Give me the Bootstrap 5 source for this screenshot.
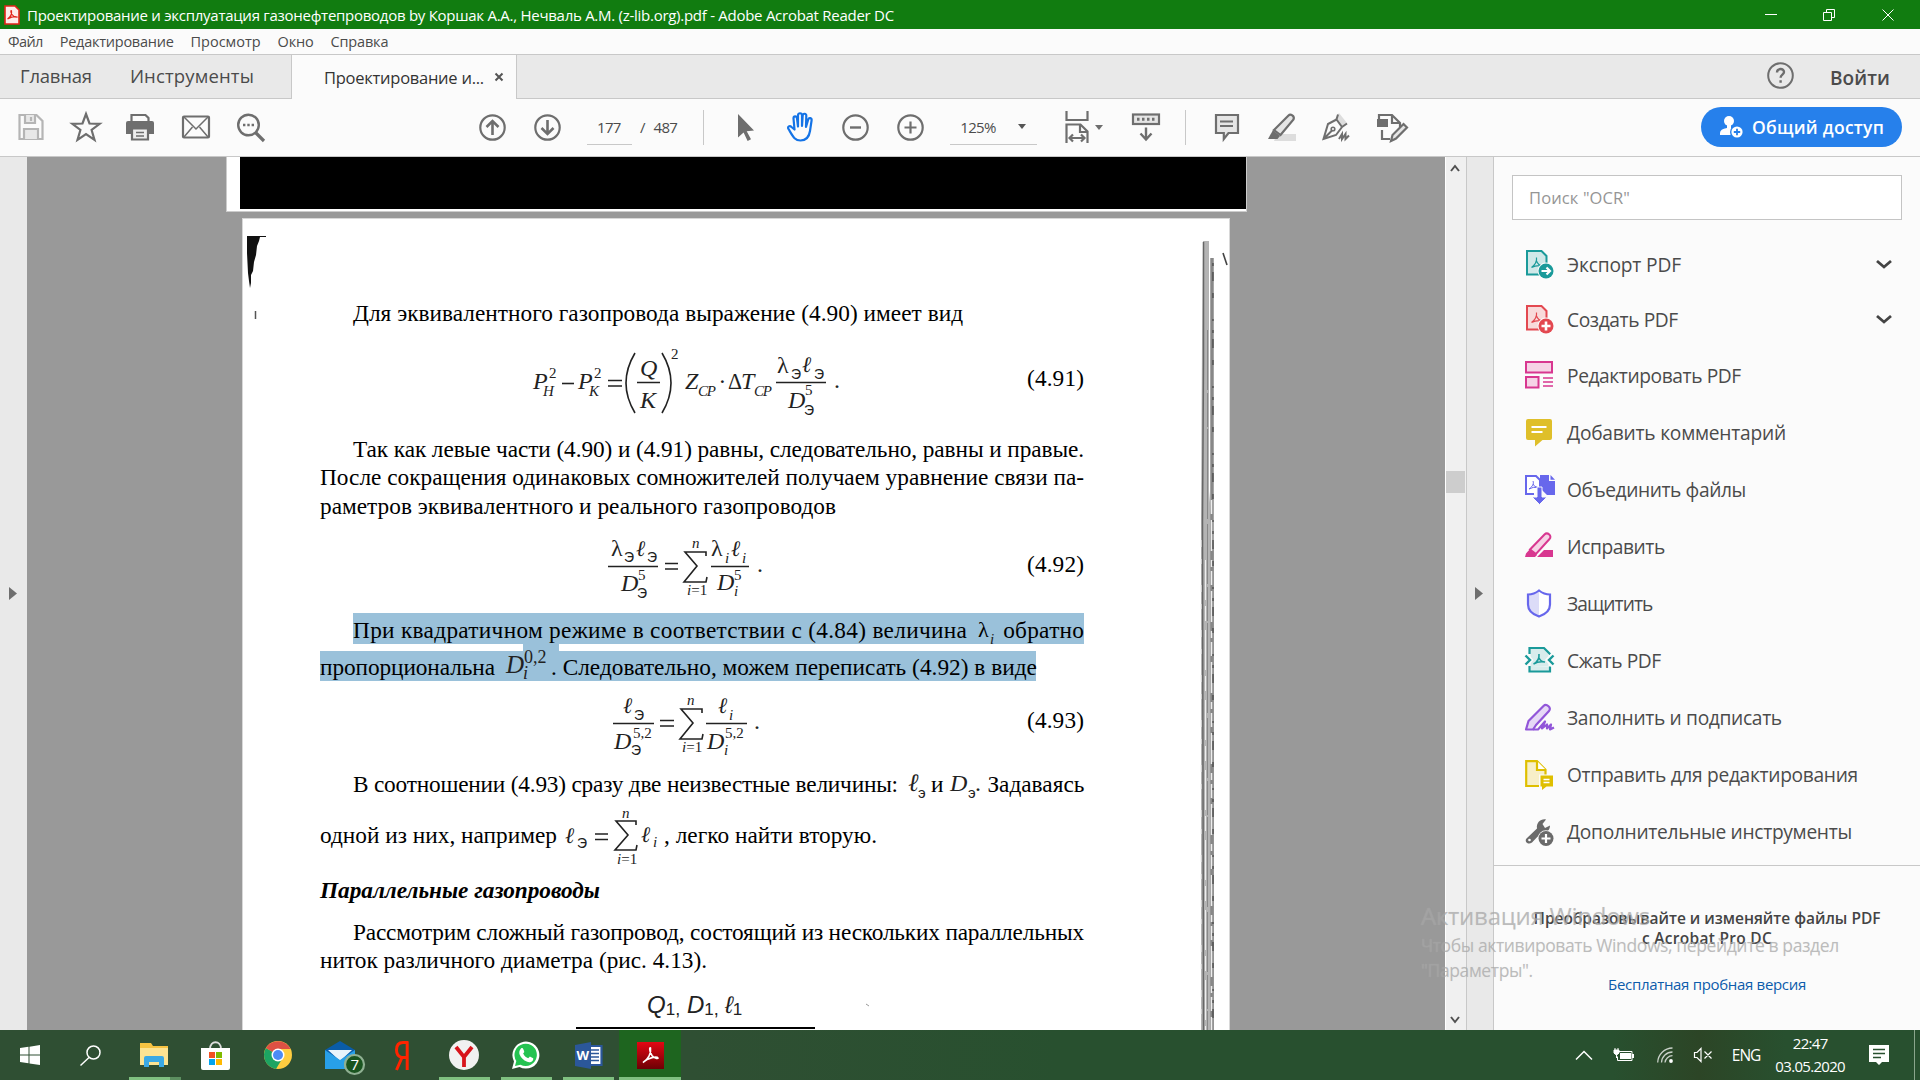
<!DOCTYPE html>
<html lang="ru">
<head>
<meta charset="utf-8">
<meta name="viewport" content="width=device-width, initial-scale=1">
<title>Adobe Acrobat Reader DC</title>
<link href="https://cdn.jsdelivr.net/npm/bootstrap@5.3.0/dist/css/bootstrap.min.css" rel="stylesheet">
<style>
html,body{height:100%;overflow:hidden}
body{font-family:"Open Sans","Noto Sans",sans-serif;color:#4b4b4b;background:#fbfbfb;width:1920px;height:1080px;line-height:1.2}
svg{display:block;flex:none;overflow:visible}
[data-w]{white-space:pre;display:inline-block}
.titlebar{height:29px;background:#117c10;color:#fff;font-size:15px;padding-left:4px}
.winbtn{width:58.5px;display:flex;justify-content:center}
.menubar{height:26px;border-bottom:1px solid #c8c8c8;font-size:14.5px;padding-left:8px;gap:17px;padding-top:1px}
.tabstrip{height:44px;background:#e9e9e9}
.tabstrip>div{border-bottom:1px solid #c8c8c8}
.tab-plain{width:291px;padding-left:20px;gap:38px;font-size:18.5px}
.tabstrip>.tab-open{width:226px;background:#fbfbfb;border:1px solid #c8c8c8;border-width:0 1px;padding-left:32px;padding-top:1px;color:#333;font-size:16.5px}
.tab-rest{padding-right:30px;gap:36px;font-size:19px}
.toolrow{height:58px;border-bottom:1px solid #c8c8c8;color:#6e6e6e;padding-left:3px;padding-bottom:1px}
.tool{width:55px;display:flex;justify-content:center}
.tool svg,.tile svg{fill:none;stroke:currentColor;stroke-width:2.2}
.field{height:35px;border-bottom:1px solid #c8c8c8;font-size:15px;color:#4b4b4b}
.vsep{width:1px;height:35px;background:#c8c8c8}
.share{width:201px;height:40px;border-radius:20px;background:#2680eb;color:#fff;font-weight:600;font-size:17.5px;padding-left:19px;gap:9px;margin-right:18px}
.workarea{height:873px}
.leftstrip{width:27px;background:#e9e9e9;padding-left:9px}
.canvas-gray{width:1418px;background:#999;overflow:hidden;padding-left:199px}
.prevpage{width:1021px;height:55px;background:#fff;border:1px solid #ccc;border-top:0;padding:0 0 3px 13px}
.prevpage div{background:#000;height:52px}
.page{width:988px;height:820px;margin:6px 0 0 16px;border:1px solid #d8d8d8;border-bottom:0;background:#fff;padding:80px 0 0 77px;color:#000;font-family:"Liberation Serif",serif;font-size:23.3px}
.ln{height:28px;line-height:28px;display:flex;position:relative}
.ind{padding-left:33px}
.sel::before{content:"";position:absolute;background:#9ac1da;z-index:0}
.sel>*{position:relative;z-index:1}
.sel-a::before{left:33px;top:-3px;width:731px;height:31px}
.sel-b::before{left:0;top:-2px;width:716px;height:30px}
.sel-b .bump{position:absolute;left:203px;top:-9px;width:36px;height:10px;background:#9ac1da;z-index:0}
.eqrow{display:flex;width:765px;position:relative}
.eqrow>span{position:absolute;left:707px}
.math{font-family:"Liberation Serif",serif;font-style:italic;font-size:24px;fill:#222;stroke:none}
.math .s{font-size:15px}
.math .e{font-family:"Liberation Sans",sans-serif;font-style:normal;font-size:14px}
.math .u{font-style:normal}
.math .l{font-family:"Liberation Serif","DejaVu Serif",serif;font-size:22px}
.math path{fill:none;stroke:#222;stroke-width:1.6}
.scroller{width:22px;background:#f0f0f0;border-right:1px solid #c8c8c8;border-left:1px solid #fff}
.thumb{width:19px;height:22px;background:#cdcdcd;margin-top:299px}
.rightstrip{width:27px;background:#e9e9e9;border-right:1px solid #c8c8c8;padding-left:8px}
.panel{width:426px;background:#fbfbfb;padding-top:18px}
.search{width:390px;height:45px;margin-left:18px;background:#fff;border:1px solid #c4c4c4;color:#959595;font-size:16.5px;padding:1px 0 0 16px}
.toolitem{height:57px;padding-left:31px;gap:12px;font-size:19.2px;color:#4b4b4b}
.promo{border-top:1px solid #c8c8c8;height:165px;padding-top:42px;font-size:15.5px;font-weight:600;color:#444;line-height:20px}
.promo a{font-weight:400;color:#0d5cab;font-size:15px;text-decoration:none;margin-top:26px}
.wmark{position:absolute;left:1421px;top:899px;color:rgba(160,160,160,.65);font-size:17.5px;line-height:25px;text-shadow:0 0 1px rgba(200,200,200,.35)}
.wmark .big{font-size:24px;line-height:34px}
.taskbar{height:50px;background:linear-gradient(90deg,#2f4f33 0,#2f4f33 36%,#28502f 55%,#28502f 84%,#2c4526 88.5%,#28502f 93%,#28502f);color:#fff;font-size:15.5px}
.tile{width:62px;height:50px;display:flex;align-items:center;justify-content:center;position:relative}
.tile svg{stroke:none}
.run::after{content:"";position:absolute;left:6px;right:5px;bottom:0;height:3px;background:#7fc080}
.run2::after{right:15px;box-shadow:11px 0 0 0 #5c8f60}
.act{background:#1e651f}.act::after{left:0;right:0}
.scan{position:absolute;left:243px;top:219px;z-index:2}
</style>
</head>
<body class="d-flex flex-column position-relative">

<header class="titlebar d-flex align-items-center">
  <svg width="16" height="20" viewBox="0 0 16 20"><path d="M1 1h10l4 4v14H1z" fill="#fdecea" stroke="#e2231a" stroke-width="1.6"/><path d="M3.500 14c3-2 4.500-5 4-8-.5-1.500-1.300 1 .5 3.500 1.500 2 3 3 5 2.500-2-1-6 .2-9.500 2z" fill="none" stroke="#e2231a" stroke-width="1.200"/></svg>
  <span data-w="867" style="margin-left:7px">Проектирование и эксплуатация газонефтепроводов by Коршак А.А., Нечваль А.М. (z-lib.org).pdf - Adobe Acrobat Reader DC</span>
  <div class="d-flex ms-auto align-items-center" style="padding-right:3px">
    <div class="winbtn"><svg width="12" height="12"><path d="M0 5.500h12" stroke="#fff"/></svg></div>
    <div class="winbtn"><svg width="12" height="12"><path d="M.5 3.500h8v8h-8zM3.500 3.500v-3h8v8h-3" fill="none" stroke="#fff"/></svg></div>
    <div class="winbtn"><svg width="12" height="12"><path d="M.5.5l11 11M11.500.5l-11 11" stroke="#fff"/></svg></div>
  </div>
</header>

<nav class="menubar d-flex align-items-center">
  <span data-w="35">Файл</span><span data-w="114">Редактирование</span><span data-w="70">Просмотр</span><span data-w="36">Окно</span><span data-w="58">Справка</span>
</nav>

<div class="tabstrip d-flex">
  <div class="tab-plain d-flex align-items-center"><span data-w="72">Главная</span><span data-w="124">Инструменты</span></div>
  <div class="tab-open d-flex align-items-center"><span data-w="160">Проектирование и...</span>
    <svg style="margin-left:11px;margin-bottom:2px" width="8" height="8"><path d="M.5.5l7 7M7.500.5l-7 7" stroke="#555" stroke-width="2"/></svg></div>
  <div class="tab-rest flex-grow-1 d-flex align-items-center justify-content-end">
    <svg width="27" height="27" viewBox="0 0 27 27" fill="none" stroke="#6e6e6e" stroke-width="2"><circle cx="13.500" cy="12.500" r="12.300"/><path d="M10 9.500c0-4.500 7-4.500 7-.5 0 2.800-3.400 2.600-3.400 5.800M13.600 17.200v2.600" stroke-width="2.400"/></svg>
    <span data-w="60" class="fw-semibold pt-1">Войти</span>
  </div>
</div>

<div class="toolrow d-flex align-items-center">
  <div class="tool" style="color:#b5b5b5"><svg width="28" height="28" viewBox="0 0 28 28"><path d="M2.500 2h17l6 6v18h-23z"/><path d="M8 2v8h10V2M14 4v4M7 26V16h14v10" fill="#e8e8e8"/></svg></div>
  <div class="tool"><svg width="30" height="30" viewBox="0 0 30 30"><path d="M15 2l3.500 9.500 10.200.3-8.100 6.200 2.900 9.900-8.500-5.800-8.500 5.800 2.900-9.900-8.100-6.200 10.200-.3z"/></svg></div>
  <div class="tool"><svg style="margin-right:2px" width="28" height="28" viewBox="0 0 28 28"><path d="M5.500 9V2h14l3 3v4"/><path d="M0 10q0-2 2-2h24q2 0 2 2v11h-5v-5H5v5H0z" fill="currentColor" stroke="none"/><path d="M6 15.500h16v11H6z" fill="#eee"/><path d="M10 19.500h8M10 23h8" stroke-width="1.500"/></svg></div>
  <div class="tool"><svg width="28" height="24" viewBox="0 0 28 24"><rect x="1" y="1.500" width="26" height="21" rx="1"/><path d="M2 2l12 12L26 2M2 22l8.500-10M26 22l-8.500-10" stroke-width="1.500"/></svg></div>
  <div class="tool"><svg width="28" height="30" viewBox="0 0 28 30"><circle cx="11.500" cy="13" r="10.300" stroke-width="2.400"/><path d="M18.500 20.500l8.500 8.500" stroke-width="3.200"/><path d="M6 13h2.400M10.300 13h2.400M14.600 13h2.400" stroke-width="2.400"/></svg></div>
  <div class="tool" style="margin-left:187px"><svg width="27" height="27" viewBox="0 0 27 27"><circle cx="13.500" cy="13.500" r="12.200"/><path d="M13.500 21V7.500M7.500 13l6-6 6 6" stroke-width="2.600"/></svg></div>
  <div class="tool"><svg width="27" height="27" viewBox="0 0 27 27"><circle cx="13.500" cy="13.500" r="12.200"/><path d="M13.500 6v13.500M7.500 14l6 6 6-6" stroke-width="2.600"/></svg></div>
  <div class="field d-flex align-items-center" style="width:45px;margin-left:12px;padding-left:10px"><span data-w="24">177</span></div>
  <div class="d-flex" style="margin-left:8px;font-size:15px;color:#4b4b4b;gap:8px"><span>/</span><span data-w="24">487</span></div>
  <div class="vsep" style="margin-left:26px"></div>
  <div class="tool" style="margin-left:14px"><svg width="18" height="27" viewBox="0 0 18 27"><path d="M1 0l16 16.500-7.300.7 4.300 8-3.400 1.800-4-8.500L1 23.500z" fill="#6e6e6e" stroke="none"/></svg></div>
  <div class="tool" style="color:#1473e6"><svg width="29" height="30" viewBox="0 0 29 30" stroke-linecap="round" stroke-linejoin="round"><path d="M8.500 17.500L7.500 6.500c0-2.800 3.200-2.800 3.500 0l1 8V3.500c0-3 4-3 4 0V14l.7-10.500c.3-2.500 3.600-2.300 3.600.3L20 15l2.200-7.500c.8-2.300 3.700-1.500 3.400.8L24 19c-1 6.500-4 9.500-9.500 9.500-6 0-7.500-4-12-11.500-1.500-2.500 1.300-3.800 3-2z"/></svg></div>
  <div class="tool"><svg width="27" height="27" viewBox="0 0 27 27"><circle cx="13.500" cy="13.500" r="12.200"/><path d="M8 13.500h11" stroke-width="2.400"/></svg></div>
  <div class="tool"><svg width="27" height="27" viewBox="0 0 27 27"><circle cx="13.500" cy="13.500" r="12.200"/><path d="M7.500 13.500h12M13.500 7.500v12" stroke-width="2.200"/></svg></div>
  <div class="field d-flex align-items-center" style="width:87px;margin-left:12px;padding-left:10px"><span data-w="36">125%</span><svg style="margin-left:22px" width="8" height="5"><path d="M0 0h8l-4 5z" fill="#555"/></svg></div>
  <div class="tool" style="margin-left:12px"><svg width="24" height="32" viewBox="0 0 24 32"><path d="M1.500 0v9h21V0M1.500 32V13.500h14l7 7V32M15 14v7h7M5 27h14M8 23.500L4.500 27 8 30.500M16 23.500l3.500 3.500-3.500 3.500"/></svg></div>
  <svg style="margin-left:-9px" width="8" height="5"><path d="M0 0h8l-4 5z" fill="#6e6e6e"/></svg>
  <div class="tool" style="margin-left:15px"><svg width="28" height="28" viewBox="0 0 28 28"><rect x="1" y="1.500" width="26" height="9.500" fill="#e5e5e5"/><path d="M5 6.200h18" stroke-dasharray="2.500 2.500" stroke-width="3"/><path d="M14 14.500v11M8.500 20.500l5.500 6 5.500-6" stroke-width="2.400"/></svg></div>
  <div class="vsep" style="margin-left:12px"></div>
  <div class="tool" style="margin-left:13px"><svg width="26" height="28" viewBox="0 0 26 28"><path d="M2 2h22v18H14.500l-4.700 6v-6H2z" fill="#e5e5e5"/><path d="M6 8.500h13M6 13h13" stroke-width="1.800"/></svg></div>
  <div class="tool"><svg width="28" height="28" viewBox="0 0 28 28"><path d="M9 21h19v7H6z" fill="#ddd" stroke="none"/><path d="M6 17L20.500 2.500c2-2 6.500.5 5 4L12.500 22z" fill="#e5e5e5"/><path d="M5 17l7 6-2.500 3H0z" fill="#6e6e6e" stroke="none"/></svg></div>
  <div class="tool"><svg width="29" height="28" viewBox="0 0 29 28"><path d="M13 6l4-6 8 10-4 4z" fill="#ddd" stroke="none"/><path d="M14.500 6.500L6 11 1.500 26 14 22l6-8zM14.500 6.500L16 1.500M20 14l5-3.500M2 25.500l8-8M17 26l3-5v5l3.500-5v5l3.500-3.500" stroke-width="2"/><circle cx="11" cy="16" r="1.800" stroke-width="1.600"/></svg></div>
  <div class="tool"><svg width="30" height="29" viewBox="0 0 30 29"><rect x="0" y="6" width="11" height="8" fill="#6e6e6e" stroke="none"/><path d="M2 6V2h13l8 8v4M15 2v8h7M5 17v9h8"/><path d="M14 28l1.500-6 11-11 3.500 3.500-11 11z" fill="#e5e5e5"/></svg></div>
  <div class="share d-flex align-items-center ms-auto">
    <svg width="23" height="24" viewBox="0 0 23 24"><circle cx="9" cy="6" r="5" fill="#fff"/><path d="M7 9h4v4l4 2v5H0v-2q0-4 7-5z" fill="#fff"/><circle cx="17" cy="17" r="7" fill="#2680eb"/><circle cx="17" cy="17" r="5.600" fill="#fff"/><path d="M13.800 17h6.400M17 13.800v6.400" stroke="#2680eb" stroke-width="1.800"/></svg>
    <span data-w="132">Общий доступ</span>
  </div>
</div>

<main class="workarea d-flex">
  <aside class="leftstrip d-flex align-items-center"><svg width="8" height="13"><path d="M0 0l8 6.500-8 6.500z" fill="#6e6e6e"/></svg></aside>

  <section class="canvas-gray">
    <div class="prevpage"><div></div></div>
    <article class="page">
      <div class="ln ind"><span data-w="610">Для эквивалентного газопровода выражение (4.90) имеет вид</span></div>

      <div class="eqrow" style="height:108px">
        <svg class="math" width="700" height="108" viewBox="320 327 700 108">
          <text x="533" y="389">P</text><text class="s u" x="549" y="378">2</text><text class="s" x="543" y="396">H</text>
          <path d="M562 383.500h12"/>
          <text x="578" y="389">P</text><text class="s u" x="594" y="378">2</text><text class="s" x="589" y="396">K</text>
          <path d="M608 380.500h14M608 386h14M637 382.500h23M635 353q-18 30 0 60M662 353q18 30 0 60"/>
          <text x="640" y="376">Q</text><text x="640" y="408">K</text><text class="s u" x="671" y="359">2</text>
          <text x="685" y="389">Z</text><text class="s" x="698" y="396" textLength="18">СР</text><text x="719" y="389">·</text>
          <text x="728" y="389" class="u" textLength="14" lengthAdjust="spacingAndGlyphs">Δ</text><text x="741" y="389">T</text><text class="s" x="754" y="396" textLength="18">СР</text>
          <path d="M776 382.500h50"/>
          <text x="777" y="373" class="u">λ</text><text class="e" x="791" y="379">Э</text><text class="l" x="802" y="372">ℓ</text><text class="e" x="814" y="379">Э</text>
          <text x="788" y="408">D</text><text class="s u" x="805" y="395">5</text><text class="e" x="804" y="415">Э</text><text class="u" x="834" y="388">.</text>
        </svg>
        <span style="top:38px" data-w="57">(4.91)</span>
      </div>

      <div class="ln ind"><span data-w="731">Так как левые части (4.90) и (4.91) равны, следовательно, равны и правые.</span></div>
      <div class="ln" style="margin-bottom:1px"><span data-w="764">После сокращения одинаковых сомножителей получаем уравнение связи па-</span></div>
      <div class="ln"><span data-w="516">раметров эквивалентного и реального газопроводов</span></div>

      <div class="eqrow" style="height:96px">
        <svg class="math" width="700" height="95" viewBox="320 520 700 95">
          <text x="611" y="556" class="u">λ</text><text class="e" x="624" y="562">Э</text><text class="l" x="636" y="556">ℓ</text><text class="e" x="647" y="562">Э</text>
          <path d="M608 566.500h50M665 563.500h13M665 569h13M711 566.500h38"/>
          <text x="621" y="591">D</text><text class="s u" x="638" y="580">5</text><text class="e" x="637" y="598">Э</text>
          <path d="M706 556v-4h-21l12 14-13 16h22l1-5" stroke-width="2"/>
          <text class="s" x="692" y="548">n</text><text class="s" x="687" y="595">i<tspan class="u">=1</tspan></text>
          <text x="711" y="556" class="u">λ</text><text class="s" x="725" y="563">i</text><text class="l" x="731" y="556">ℓ</text><text class="s" x="742" y="563">i</text>
          <text x="717" y="590">D</text><text class="s u" x="734" y="580">5</text><text class="s" x="734" y="596">i</text><text class="u" x="757" y="572">.</text>
        </svg>
        <span style="top:31px" data-w="57">(4.92)</span>
      </div>

      <div class="ln ind sel sel-a"><span data-w="614">При квадратичном режиме в соответствии с (4.84) величина</span>
        <svg class="math" style="margin-left:11px" width="22" height="28" viewBox="0 0 22 28"><text class="u" x="0" y="21" style="fill:#000;font-size:22px">λ</text><text class="s" x="12" y="28">i</text></svg>
        <span data-w="81" style="margin-left:3px">обратно</span></div>
      <div class="ln sel sel-b" style="margin-top:9px"><i class="bump"></i><span data-w="175">пропорциональна</span>
        <svg class="math" style="margin-left:11px" width="43" height="28" viewBox="0 0 43 28"><text x="0" y="20" style="font-size:25px">D</text><text class="u" x="18" y="10" style="font-size:18px">0,2</text><text x="17" y="26" style="font-size:18px">i</text></svg>
        <span data-w="486" style="margin-left:2px">. Следовательно, можем переписать (4.92) в виде</span></div>

      <div class="eqrow" style="height:89px">
        <svg class="math" width="700" height="89" viewBox="320 681 700 89">
          <text class="l" x="623" y="713">ℓ</text><text class="e" x="634" y="720">Э</text>
          <path d="M613 723.500h41M660 720.500h14M660 726h14M706 723.500h41"/>
          <text x="614" y="749">D</text><text class="s u" x="633" y="738">5,2</text><text class="e" x="631" y="755">Э</text>
          <path d="M702 713v-4h-21l12 14-13 16h22l1-5" stroke-width="2"/>
          <text class="s" x="687" y="705">n</text><text class="s" x="682" y="752">i<tspan class="u">=1</tspan></text>
          <text class="l" x="718" y="713">ℓ</text><text class="s" x="729" y="720">i</text>
          <text x="707" y="749">D</text><text class="s u" x="725" y="738">5,2</text><text class="s" x="724" y="755">i</text><text class="u" x="754" y="729">.</text>
        </svg>
        <span style="top:26px" data-w="57">(4.93)</span>
      </div>

      <div class="ln ind"><span data-w="545">В соотношении (4.93) сразу две неизвестные величины:</span>
        <svg class="math" style="margin-left:10px" width="20" height="28" viewBox="0 0 20 28"><text class="l" x="0" y="21" style="font-size:25px">ℓ</text><text class="e" x="10" y="28" style="font-size:15px">э</text></svg>
        <span style="margin-left:3px">и</span>
        <svg class="math" style="margin-left:7px" width="33" height="28" viewBox="0 0 33 28"><text x="0" y="21">D</text><text class="e" x="18" y="28" style="font-size:15px">э</text><text class="u" x="25" y="21">.</text></svg>
        <span data-w="97" style="margin-left:4px">Задаваясь</span></div>
      <div class="ln" style="margin-top:23px"><span data-w="237">одной из них, например</span>
        <svg class="math" style="margin-left:9px" width="95" height="28" viewBox="566 821 95 28"><text class="l" x="565" y="843">ℓ</text><text class="e" x="577" y="848">Э</text><path d="M595 834h13M595 839.500h13"/><path d="M636 825v-4h-20l12 14-13 15h21l1-5" stroke-width="2"/><text class="s" x="622" y="818">n</text><text class="s" x="617" y="864">i<tspan class="u">=1</tspan></text><text class="l" x="641" y="842">ℓ</text><text class="s" x="653" y="847">i</text></svg>
        <span data-w="213" style="margin-left:3px">, легко найти вторую.</span></div>
      <div class="ln fst-italic fw-bold" style="margin-top:27px"><span data-w="280">Параллельные газопроводы</span></div>
      <div class="ln ind" style="margin-top:14px"><span data-w="731">Рассмотрим сложный газопровод, состоящий из нескольких параллельных</span></div>
      <div class="ln"><span data-w="387">ниток различного диаметра (рис. 4.13).</span></div>
      <div class="eqrow" style="height:56px">
        <svg class="math" width="700" height="56" viewBox="320 975 700 56"><g style="font-family:'Liberation Sans',sans-serif;font-size:24px"><text x="647" y="1014">Q<tspan class="e" dy="2" style="font-size:17px">1</tspan><tspan class="e" style="font-size:18px">,</tspan></text><text x="687" y="1014">D<tspan class="e" dy="2" style="font-size:17px">1</tspan><tspan class="e" style="font-size:18px">,</tspan></text><text x="725" y="1014">ℓ<tspan class="e" dy="2" style="font-size:17px">1</tspan></text></g><path d="M576 1029h239" style="stroke:#000;stroke-width:2"/></svg>
      </div>
    </article>
  </section>

  <div class="scroller d-flex flex-column align-items-start">
    <svg style="margin:7px 0 0 4px" width="10" height="8"><path d="M1 7l4-5 4 5" fill="none" stroke="#505050" stroke-width="2"/></svg>
    <div class="thumb"></div>
    <svg class="mt-auto" style="margin:0 0 6px 4px" width="10" height="8"><path d="M1 1l4 5 4-5" fill="none" stroke="#505050" stroke-width="2"/></svg>
  </div>
  <aside class="rightstrip d-flex align-items-center"><svg width="8" height="13"><path d="M0 0l8 6.500-8 6.500z" fill="#6e6e6e"/></svg></aside>

  <aside class="panel d-flex flex-column">
    <div class="search d-flex align-items-center"><span data-w="101">Поиск "OCR"</span></div>
    <div style="height:17px"></div>
    <div class="toolitem d-flex align-items-center" style="height:55px">
      <svg width="30" height="30" viewBox="0 0 30 30"><path d="M2 1h14.500l5 5v18.500H2z" fill="#cfe8e8" stroke="#1a9a9a" stroke-width="2"/><path d="M6.500 17.500c4-3 5.500-6.500 5-10M11.500 11c1 2.500 3 4.500 6 5M6.500 17.500q5-2.500 11-1.500" fill="none" stroke="#1a9a9a" stroke-width="1.200"/><circle cx="21" cy="21" r="8.400" fill="#fbfbfb"/><circle cx="21" cy="21" r="7.500" fill="#1a9a9a"/><path d="M16.500 21h8M21.500 17.500l3.500 3.500-3.500 3.500" stroke="#fff" stroke-width="2.200" fill="none"/></svg>
      <span data-w="114">Экспорт PDF</span>
      <svg class="ms-auto" style="margin-right:28px" width="16" height="9"><path d="M1 1l7 6 7-6" fill="none" stroke="#444" stroke-width="2.800"/></svg></div>
    <div class="toolitem d-flex align-items-center" style="height:55px">
      <svg width="30" height="30" viewBox="0 0 30 30"><path d="M2 1h14.500l5 5v18.500H2z" fill="#f8dada" stroke="#e34850" stroke-width="2"/><path d="M6.500 17.500c4-3 5.500-6.500 5-10M11.500 11c1 2.500 3 4.500 6 5M6.500 17.500q5-2.500 11-1.500" fill="none" stroke="#e34850" stroke-width="1.200"/><circle cx="21" cy="21" r="8.400" fill="#fbfbfb"/><circle cx="21" cy="21" r="7.500" fill="#e34850"/><path d="M16.500 21h9M21 16.500v9" stroke="#fff" stroke-width="2.600"/></svg>
      <span data-w="111">Создать PDF</span>
      <svg class="ms-auto" style="margin-right:28px" width="16" height="9"><path d="M1 1l7 6 7-6" fill="none" stroke="#444" stroke-width="2.800"/></svg></div>
    <div class="toolitem d-flex align-items-center">
      <svg width="30" height="30" viewBox="0 0 30 30" stroke="#d83790" stroke-width="2" fill="#f6d3e6"><rect x="1" y="1" width="26" height="10.500"/><rect x="1" y="16" width="12.500" height="10.500"/><path d="M18 17h10M18 21h10M18 25h10" stroke-width="1.300"/></svg>
      <span data-w="174">Редактировать PDF</span></div>
    <div class="toolitem d-flex align-items-center">
      <svg width="30" height="30" viewBox="0 0 30 30"><path d="M3 1h22q2 0 2 2v17q0 2-2 2h-7.500L10 28.500V22H3q-2 0-2-2V3q0-2 2-2z" fill="#dfbf2a"/><path d="M6.500 9h15M6.500 14h11" stroke="#fff" stroke-width="2"/></svg>
      <span data-w="219">Добавить комментарий</span></div>
    <div class="toolitem d-flex align-items-center">
      <svg width="30" height="30" viewBox="0 0 30 30"><path d="M15 0h9v6h6v14h-8l-7-7z" fill="#6767ec"/><path d="M25.500 0l4.500 4.800h-4.500z" fill="#6767ec"/><path d="M9 19H1V1h10l4 4v10" fill="#fff" stroke="#6767ec" stroke-width="2"/><path d="M4 14c4-3 5-5.500 4-8M8 9q1 3 5 3.500M4 14q4-2.500 9-1.500" stroke="#6767ec" fill="none"/><path d="M12 12h5v10h5l-7.500 7.500L7 22h5z" fill="#6767ec" stroke="#fbfbfb"/></svg>
      <span data-w="179">Объединить файлы</span></div>
    <div class="toolitem d-flex align-items-center">
      <svg width="30" height="30" viewBox="0 0 30 30"><path d="M5 17.500L19.500 2.500c3-3 8 1.500 5 4.500L11 22z" fill="#f6d3e6" stroke="#d83790" stroke-width="2"/><path d="M5 17l7 6-2 2H0l1-3.500zM12 25l7-7h9v7z" fill="#d83790"/></svg>
      <span data-w="98">Исправить</span></div>
    <div class="toolitem d-flex align-items-center">
      <svg width="30" height="30" viewBox="0 0 30 30"><path d="M14 1.500q5 4 11 4v10c0 6-5 10-11 12C8 25.500 3 21.500 3 15.500v-10q6 0 11-4z" fill="#fff"/><path d="M14 1.500q-5 4-11 4v10c0 6 5 10 11 12z" fill="#dcdcf8"/><path d="M14 1.500q5 4 11 4v10c0 6-5 10-11 12C8 25.500 3 21.500 3 15.500v-10q6 0 11-4z" fill="none" stroke="#6767ec" stroke-width="2.200"/></svg>
      <span data-w="86">Защитить</span></div>
    <div class="toolitem d-flex align-items-center">
      <svg width="30" height="30" viewBox="0 0 30 30"><path d="M4.500 8V2H19l6 6v1M4.500 20v5.500H25v-5" fill="#d8ecec" stroke="#1a9a9a" stroke-width="2.200"/><path d="M5.500 8h18v12h-18z" fill="#d8ecec"/><path d="M8.500 18c4-2 6-5 5.500-10M14 12q2 4 6 4M8.500 18q5-3 11.500-2" stroke="#1a9a9a" stroke-width="1.600" fill="none"/><path d="M0 9l4.500 5L0 19M28.500 9L24 14l4.500 5" fill="none" stroke="#fbfbfb" stroke-width="6"/><path d="M.5 9.500L5 14 .5 18.500M28.500 9.500L24 14l4.500 4.500" fill="none" stroke="#1a9a9a" stroke-width="2.400"/></svg>
      <span data-w="94">Сжать PDF</span></div>
    <div class="toolitem d-flex align-items-center">
      <svg width="30" height="30" viewBox="0 0 30 30" stroke="#9256d9" stroke-width="2.200" stroke-linejoin="round"><path d="M3.500 18L18.500 3c3-3 8.500 2 5.500 5L11 22l-3 4.500H1z" fill="#e6d9f6"/><path d="M8 26.500h5l7-8-3 7 5-4v4l4-4-1 5 4-2" fill="none"/></svg>
      <span data-w="215">Заполнить и подписать</span></div>
    <div class="toolitem d-flex align-items-center">
      <svg width="30" height="30" viewBox="0 0 30 30"><path d="M1.200 1.200H12l8.500 8.500V26H1.200z" fill="#f7efc8" stroke="#dfbf00" stroke-width="2.200"/><path d="M12 1v9h9" stroke="#dfbf00" stroke-width="2.200" fill="#fff"/><path d="M14 14.500h15v14H14z" fill="#fbfbfb"/><path d="M15.500 15.500H28v11h-6.500L17 30v-3.500h-1.500z" fill="#dfbf00"/><path d="M18.500 19.500h6M18.500 22.500h6" stroke="#fff" stroke-width="1.400"/></svg>
      <span data-w="291">Отправить для редактирования</span></div>
    <div class="toolitem d-flex align-items-center">
      <svg width="30" height="30" viewBox="0 0 30 30"><path d="M1.500 21.500L12 11.500c-1-6 4-10 9-9L17.500 7l2.500 4 5-2.500c0 5-4 8-8.500 7L7 25.500c-4 3-8-1-5.500-4z" fill="#6a6a6a"/><circle cx="4.500" cy="23" r="1.300" fill="#fff"/><circle cx="21" cy="21.500" r="8.300" fill="#fbfbfb"/><circle cx="21" cy="21.500" r="7.500" fill="#6a6a6a"/><path d="M16.500 21.500h9M21 17v9" stroke="#fff" stroke-width="2.200"/></svg>
      <span data-w="285">Дополнительные инструменты</span></div>
    <div class="promo mt-auto d-flex flex-column align-items-center"><span data-w="347">Преобразовывайте и изменяйте файлы PDF</span><span data-w="130">с Acrobat Pro DC</span><a href="#" data-w="198">Бесплатная пробная версия</a></div>
  </aside>
</main>

<footer class="taskbar d-flex">
  <div class="tile" style="margin-left:-1px"><svg width="20" height="20"><path d="M0 3l8.500-1.200V9.500H0zM9.500 1.700L20 0v9.500H9.500zM0 10.500h8.500v7.800L0 17zM9.500 10.500H20V20L9.500 18.400z" fill="#fff"/></svg></div>
  <div class="tile"><svg style="margin-right:4px" width="21" height="21" viewBox="0 0 21 21"><g stroke="#fff" stroke-width="1.500"><circle cx="13.500" cy="7.500" r="6.500"/><path d="M9 12.500L.5 20.500"/></g></svg></div>
  <div class="tile run run2"><svg width="28" height="24" viewBox="0 0 28 24"><path d="M0 0h11l2 3h15v18H0z" fill="#f6c342"/><path d="M0 5h28v17H0z" fill="#fde391"/><path d="M4 24v-9q0-2 2-2h16q2 0 2 2v9h-5v-5H9v5z" fill="#3ba9e4"/></svg></div>
  <div class="tile"><svg style="margin-right:1px" width="29" height="29" viewBox="0 0 29 29"><path d="M9 8c0-9 11-9 11 0" stroke="#ddd" stroke-width="1.800"/><path d="M0 7h29v20q0 2-2 2H2q-2 0-2-2z" fill="#fff"/><path d="M8 11h6v6H8z" fill="#f25022"/><path d="M15 11h6v6h-6z" fill="#7fba00"/><path d="M8 18h6v6H8z" fill="#00a4ef"/><path d="M15 18h6v6h-6z" fill="#ffb900"/></svg></div>
  <div class="tile"><svg width="28" height="28" viewBox="0 0 28 28"><circle cx="14" cy="14" r="14" fill="#ffcd40"/><path d="M14 14L1.900 7A14 14 0 0 0 12 27.900l6-10z" fill="#1da462"/><path d="M14 14L1.900 7A14 14 0 0 1 26.500 8H14z" fill="#dd5144"/><circle cx="14" cy="14" r="6.500" fill="#fff"/><circle cx="14" cy="14" r="5" fill="#4c8bf5"/></svg></div>
  <div class="tile"><svg width="30" height="28" viewBox="0 0 30 28"><path d="M0 9L15 0l15 9v19H0z" fill="#0a5ca8"/><path d="M3 9h24l-12 11z" fill="#e9f4fb"/><path d="M0 9l15 10L30 9v19H0z" fill="#28a0e8"/></svg>
    <svg class="position-absolute" style="left:35px;top:24px" width="21" height="21"><circle cx="10.500" cy="10.500" r="9.500" fill="#1a5420" stroke="#8fb092"/><text x="6.500" y="16" font-size="15" fill="#fff" font-family="Open Sans">7</text></svg></div>
  <div class="tile"><svg width="14" height="29" viewBox="0 0 14 29"><path d="M13.500 1.500H8C3 1.500 1.500 5 1.500 9c0 4 2 6.500 5 7.500h5M12.200 1v28M7 16.500L1.500 29" stroke="#ff2400" stroke-width="3"/></svg></div>
  <div class="tile run"><svg width="30" height="30" viewBox="0 0 30 30"><circle cx="15" cy="15" r="15" fill="#f1f1f1"/><path d="M7 7l8 10 8-10M15 16v11" stroke="#d8141c" stroke-width="3.800"/></svg></div>
  <div class="tile run"><svg width="28" height="28" viewBox="0 0 28 28"><path d="M0 28l2-7.500A13.500 13.500 0 1 1 7.500 26z" fill="#fff"/><path d="M3 25l1.300-5A11.200 11.200 0 1 1 8.500 23.800z" fill="#25c351"/><path d="M9 7.500c2-1.500 2.500 1 3.200 3 .3 1-1 1.500-1 2 1.500 3 3 4 5 4.700 1-.5 1.500-2 2-1.500l3 1.500c.5 4-4 4.500-6 3.500-4-1.500-6-4-7.500-7-.8-2-.5-4.500 1.300-6.200z" fill="#fff"/></svg></div>
  <div class="tile run"><svg width="27" height="27" viewBox="0 0 27 27"><path d="M14 4h12.500v19H14z" fill="#fff" stroke="#2b579a"/><path d="M15 8h9M15 11.500h9M15 15h9M15 18.500h9" stroke="#2b579a" stroke-width="1.300"/><path d="M0 3l16-3v27L0 24z" fill="#2b579a"/><text x="1.500" y="18" font-family="Open Sans" font-weight="700" font-size="13" fill="#fff">W</text></svg></div>
  <div class="tile run act"><svg width="27" height="27"><defs><linearGradient id="ag" x2="0" y2="1"><stop stop-color="#e30613"/><stop offset="1" stop-color="#6d0004"/></linearGradient></defs><rect width="27" height="27" fill="url(#ag)"/><path d="M6 20.500c5-3 8.500-9 7.500-14.500-.8-1.500-1.800 3 1.500 7.500 2 2.500 4.500 3.500 6 2.500-1-2-10-.5-15 4.500z" stroke="#fff" stroke-width="1.600"/></svg></div>

  <div class="d-flex align-items-center ms-auto">
    <svg style="margin-right:22px" width="16" height="9"><path d="M0 8.500l8-8 8 8" fill="none" stroke="#fff" stroke-width="1.500"/></svg>
    <svg style="margin-right:23px" width="20" height="14" viewBox="0 0 20 14"><path d="M4 3.500h14v9H3.500v-4" fill="none" stroke="#fff"/><path d="M6 5h11v6H6zM18 6h2v4h-2z" fill="#fff"/><path d="M0 2h5v3L3.500 6.500h-2L0 5zM1 0v2M4 0v2M2.500 6v4" fill="#fff" stroke="#fff"/></svg>
    <svg style="margin-right:21px" width="16" height="16" viewBox="0 0 16 16"><g fill="none" stroke="#fff" stroke-opacity=".75" stroke-width="1.300"><path d="M.7 15.500A15 15 0 0 1 15.500 1M4.500 15.500A11 11 0 0 1 15.500 5M8 15.500A7.500 7.500 0 0 1 15.500 8.700"/></g><circle cx="14" cy="14" r="1.900" fill="#fff"/></svg>
    <svg style="margin-right:20px" width="18" height="14" viewBox="0 0 18 14"><path d="M.5 4.500h2.500l4-4v13l-4-4H.5zM10.500 3.500l7 7M17.500 3.500l-7 7" fill="none" stroke="#fff" stroke-width="1.200"/></svg>
    <span data-w="29" style="margin-right:15px">ENG</span>
    <div class="d-flex flex-column align-items-center" style="line-height:23px;margin-right:24px;font-size:15px"><span data-w="35">22:47</span><span data-w="70">03.05.2020</span></div>
    <svg style="margin-right:25px" width="20" height="20"><path d="M0 0h20v17h-7l-3 3-3-3H0z" fill="#fff"/><path d="M4 4.500h12M4 8.500h12M4 12.500h8" stroke="#28502f" stroke-width="1.300"/></svg>
    <div style="width:1px;height:50px;background:#8aa58c;margin-right:5px"></div>
  </div>
</footer>

<!-- dark margins left by the book scanner -->
<svg class="scan" width="987" height="811" viewBox="243 219 987 811">
  <path d="M247 236h19v1h-6l-1 4-2 5-1 9-2 7-1 9-2 4v8l-1 5-1-7-1-8-1-20z" fill="#111"/><path d="M255.500 311v8" stroke="#555" stroke-width="1.500"/>
  <path d="M1223 253l4 12" stroke="#444" stroke-width="1.600"/>
  <path d="M1203 241h6v250l5 60v479h-13V520l1-180z" fill="#b4b4b4"/>
  <g fill="none"><path d="M1203.500 242v120l-1 160 1 508" stroke="#666" stroke-width="1.500"/><path d="M1207.500 330v700" stroke="#888" stroke-dasharray="60 3 34 2 90 5"/><path d="M1212 258v772" stroke="#888" stroke-width="3.500"/><path d="M1211.500 500v530" stroke="#eee" stroke-width="1.500" stroke-dasharray="14 6 31 9 7 4"/><path d="M1213 263v767" stroke="#333" stroke-dasharray="3 6 9 12 5 21 2 9"/><path d="M1201 540v490" stroke="#eee" stroke-dasharray="7 12 5 21"/><path d="M1205.500 560v470" stroke="#eee" stroke-dasharray="40 6 15 9"/></g>
  <path d="M866 1004l3 2" stroke="#999"/>
</svg>

<div class="wmark"><div class="big"><span data-w="229">Активация Windows</span></div><div><span data-w="418">Чтобы активировать Windows, перейдите в раздел</span></div><div><span data-w="112">"Параметры".</span></div></div>

<script>
// Track every label and text line out to its set measure.
document.querySelectorAll('[data-w]').forEach(function (el) {
  var n = el.textContent.length, w = el.getBoundingClientRect().width;
  el.style.letterSpacing = ((+el.dataset.w - w) / (n - 0.5)).toFixed(3) + 'px';
});
</script>
<script src="https://cdn.jsdelivr.net/npm/bootstrap@5.3.0/dist/js/bootstrap.bundle.min.js"></script>
</body>
</html>
